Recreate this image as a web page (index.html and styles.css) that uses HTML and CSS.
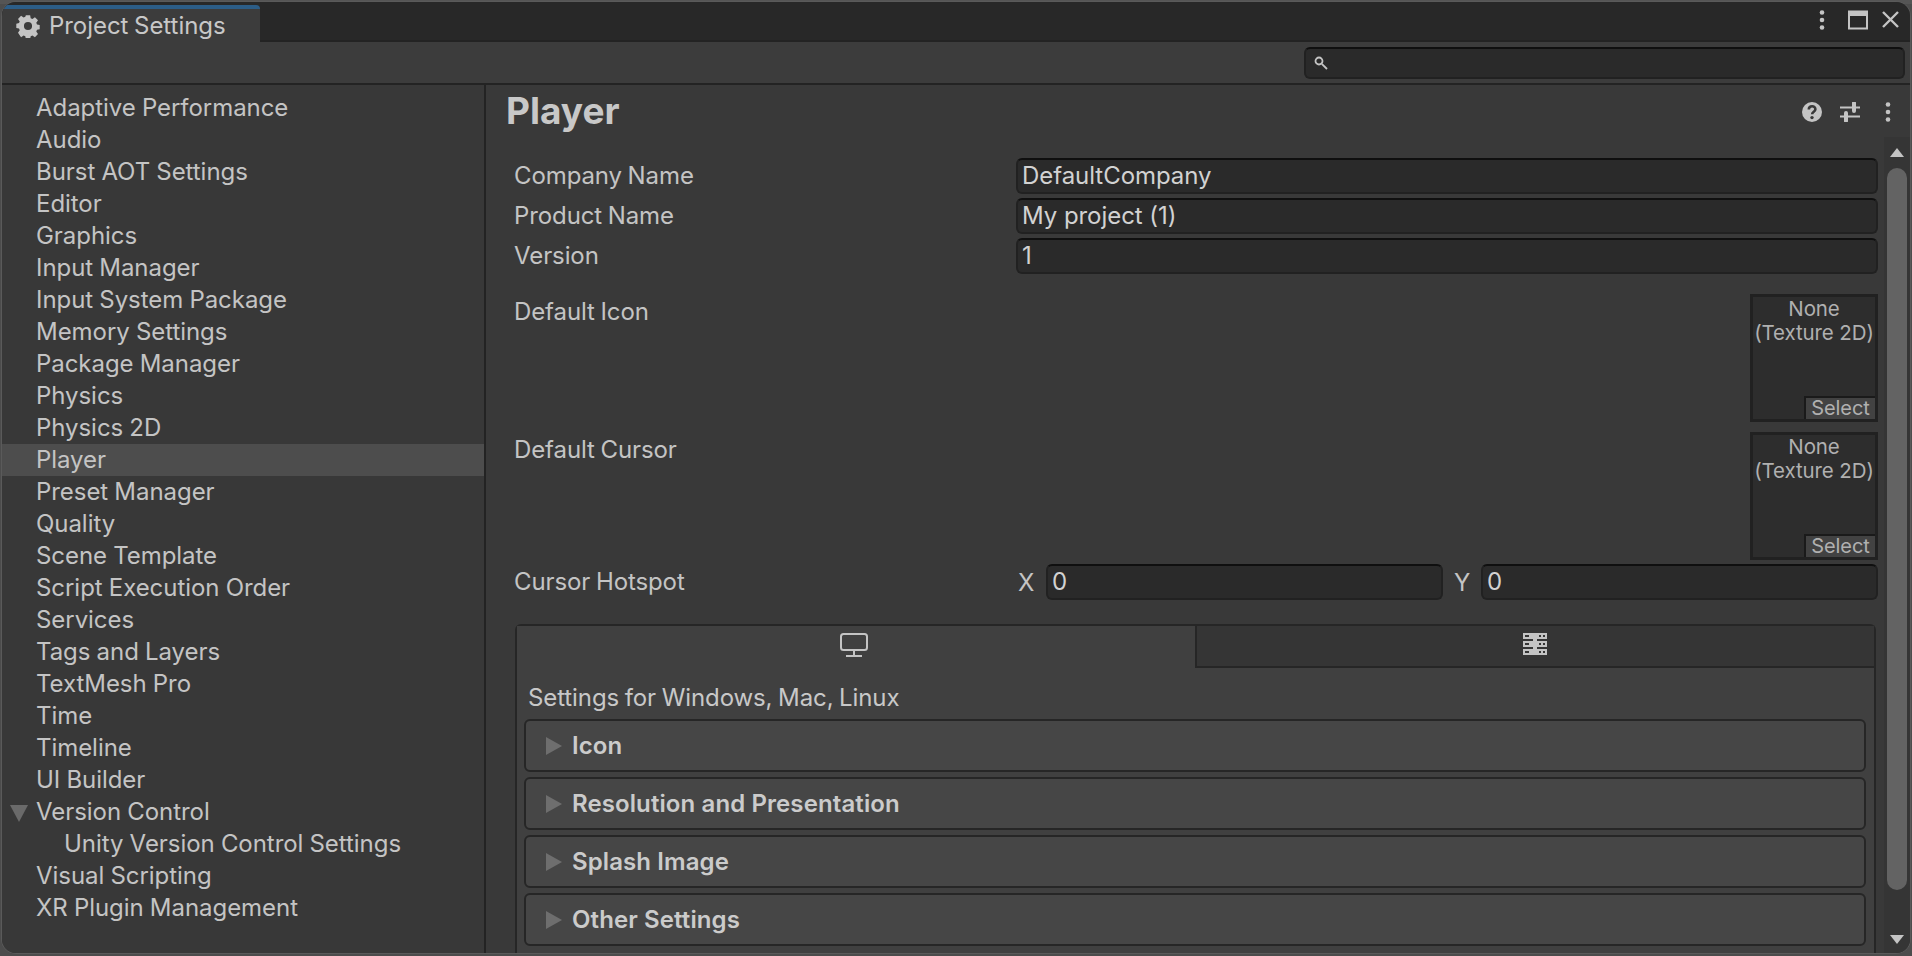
FILE: index.html
```html
<!DOCTYPE html>
<html lang="en">
<head>
<meta charset="utf-8">
<title>Project Settings</title>
<link rel="stylesheet" href="styles.css">
</head>
<body>
<div class="backdrop"><span class="backdrop-text">Information</span></div>
<div class="window">
  <div class="tabbar">
    <div class="tab">
      <svg class="gear" viewBox="0 0 24 24"><path fill-rule="evenodd" d="M9.6 0h4.8l.6 3.3 1.9.8 2.8-1.9 3.4 3.4-1.9 2.8.8 1.9 3 .6v4.800l-3 .6-.8 1.900 1.900 2.800-3.400 3.400-2.800-1.900-1.900.8-.6 3H9.600l-.6-3-1.900-.8-2.800 1.900L.9 19.500l1.900-2.800-.8-1.900-3-.6V9.400l3-.6.8-1.900L.9 4.100l3.400-3.400 2.800 1.900 1.900-.8zM12 7.500a4.500 4.500 0 1 0 0 9 4.500 4.500 0 0 0 0-9z" transform="translate(1.200 1.200) scale(.9)"/></svg>
      <span>Project Settings</span>
    </div>
    <div class="win-actions">
      <svg class="ico-dots" viewBox="0 0 6 20"><circle cx="3" cy="2.500" r="2.300"/><circle cx="3" cy="10" r="2.300"/><circle cx="3" cy="17.500" r="2.300"/></svg>
      <svg class="ico-max" viewBox="0 0 20 20"><path d="M1 1.500h18v17H1z" class="max-line"/><path d="M1 1h18v5H1z"/></svg>
      <svg class="ico-close" viewBox="0 0 17 17"><path d="M1 1l15 15M16 1L1 16"/></svg>
    </div>
  </div>
  <div class="toolbar">
    <div class="search">
      <svg class="ico-search" viewBox="0 0 14 14"><circle cx="5" cy="5" r="3.500"/><path d="M7.800 7.800L13 13"/></svg>
    </div>
  </div>
  <div class="split">
    <nav class="sidebar">
      <div class="item">Adaptive Performance</div>
      <div class="item">Audio</div>
      <div class="item">Burst AOT Settings</div>
      <div class="item">Editor</div>
      <div class="item">Graphics</div>
      <div class="item">Input Manager</div>
      <div class="item">Input System Package</div>
      <div class="item">Memory Settings</div>
      <div class="item">Package Manager</div>
      <div class="item">Physics</div>
      <div class="item">Physics 2D</div>
      <div class="item selected">Player</div>
      <div class="item">Preset Manager</div>
      <div class="item">Quality</div>
      <div class="item">Scene Template</div>
      <div class="item">Script Execution Order</div>
      <div class="item">Services</div>
      <div class="item">Tags and Layers</div>
      <div class="item">TextMesh Pro</div>
      <div class="item">Time</div>
      <div class="item">Timeline</div>
      <div class="item">UI Builder</div>
      <div class="item parent"><svg class="tri-down" viewBox="0 0 18 17"><path d="M0 0h18L9 17z"/></svg>Version Control</div>
      <div class="item child">Unity Version Control Settings</div>
      <div class="item">Visual Scripting</div>
      <div class="item">XR Plugin Management</div>
    </nav>
    <main class="main">
      <header class="head">
        <h1 class="title">Player</h1>
        <div class="head-actions">
          <svg class="ico-help" viewBox="0 0 20 20"><circle cx="10" cy="10" r="10"/><path class="help-q" d="M6.800 7.400c0-4.200 6.600-4.200 6.600-.2 0 2.600-3.300 2.500-3.300 5.100"/><circle class="help-dot" cx="10" cy="15.600" r="1.700"/></svg>
          <svg class="ico-sliders" viewBox="0 0 20 20"><path d="M0 5.500h12M16 5.500h4M0 14.500h4M8 14.500h12"/><path class="knob" d="M14 1v8M6 11v8"/></svg>
          <svg class="ico-dots head-dots" viewBox="0 0 6 20"><circle cx="3" cy="2.500" r="2.300"/><circle cx="3" cy="10" r="2.300"/><circle cx="3" cy="17.500" r="2.300"/></svg>
        </div>
      </header>
      <div class="scroller">
        <div class="content">
          <div class="row">
            <label class="label">Company Name</label>
            <div class="input grow">DefaultCompany</div>
          </div>
          <div class="row">
            <label class="label">Product Name</label>
            <div class="input grow">My project (1)</div>
          </div>
          <div class="row">
            <label class="label">Version</label>
            <div class="input grow">1</div>
          </div>
          <div class="row row-object first-object">
            <label class="label label-top">Default Icon</label>
            <div class="object">
              <div class="object-text">None<br>(Texture 2D)</div>
              <div class="select">Select</div>
            </div>
          </div>
          <div class="row row-object">
            <label class="label label-top">Default Cursor</label>
            <div class="object">
              <div class="object-text">None<br>(Texture 2D)</div>
              <div class="select">Select</div>
            </div>
          </div>
          <div class="row row-hotspot">
            <label class="label">Cursor Hotspot</label>
            <span class="axis axis-x">X</span>
            <div class="input axis-input">0</div>
            <span class="axis axis-y">Y</span>
            <div class="input axis-input">0</div>
          </div>
          <section class="tabgroup">
            <div class="platforms">
              <div class="platform active">
                <svg class="ico-monitor" viewBox="0 0 28 24"><rect x="1" y="1" width="26" height="16" rx="2.500"/><path d="M14 17v5M6 23h16"/></svg>
              </div>
              <div class="platform">
                <svg class="ico-server" viewBox="0 0 24 22"><path d="M0 0h24v6H0zM0 8h24v6H0zM0 16h24v6H0zM10 6h4v2h-4zM10 14h4v2h-4z"/><path class="hole" d="M2 2h4v2H2zM16 2h2v2h-2zM20 2h2v2h-2zM2 10h4v2H2zM16 10h2v2h-2zM20 10h2v2h-2zM2 18h4v2H2zM16 18h2v2h-2zM20 18h2v2h-2z"/></svg>
              </div>
            </div>
            <div class="settings-for">Settings for Windows, Mac, Linux</div>
            <div class="sections">
              <div class="sec"><svg class="tri-right" viewBox="0 0 16 18"><path d="M0 0l16 9L0 18z"/></svg>Icon</div>
              <div class="sec"><svg class="tri-right" viewBox="0 0 16 18"><path d="M0 0l16 9L0 18z"/></svg>Resolution and Presentation</div>
              <div class="sec"><svg class="tri-right" viewBox="0 0 16 18"><path d="M0 0l16 9L0 18z"/></svg>Splash Image</div>
              <div class="sec"><svg class="tri-right" viewBox="0 0 16 18"><path d="M0 0l16 9L0 18z"/></svg>Other Settings</div>
            </div>
          </section>
        </div>
        <div class="scrollbar">
          <svg class="arrow" viewBox="0 0 14 9"><path d="M7 0l7 9H0z"/></svg>
          <div class="thumb"></div>
          <svg class="arrow arrow-down" viewBox="0 0 14 9"><path d="M0 0h14L7 9z"/></svg>
        </div>
      </div>
    </main>
  </div>
</div>
</body>
</html>
```

FILE: styles.css
```css
* { box-sizing: border-box; }

html, body {
  margin: 0;
  height: 100%;
}

body {
  position: relative;
  width: 1912px;
  height: 956px;
  overflow: hidden;
  background: #4c4c4c;
  padding: 2px 2px 3px;
  font-family: Inter, "Noto Sans", sans-serif;
  font-size: 24px;
  letter-spacing: -0.1px;
  word-spacing: -1px;
  color: #c4c4c4;
}

.backdrop {
  position: absolute;
  inset: 0 0 auto 0;
  height: 4px;
  background: #555;
  overflow: hidden;
}

.backdrop-text {
  position: absolute;
  left: 1497px;
  top: -23px;
  font-size: 24px;
  line-height: 30px;
  color: #c4c4c4;
}

.window {
  position: relative;
  height: 951px;
  border-radius: 14px;
  overflow: hidden;
  background: #383838;
  display: flex;
  flex-direction: column;
  box-shadow: 0 0 0 1px #5a5a5a;
}

.tabbar {
  height: 40px;
  flex: none;
  display: flex;
  justify-content: space-between;
  background: #282828;
  border-bottom: 2px solid #232323;
}

.tab {
  width: 258px;
  height: 40px;
  margin-top: 3px;
  display: flex;
  align-items: center;
  gap: 9px;
  padding: 0 0 3px 14px;
  background: #3c3c3c;
  border-top: 4px solid #2c5d87;
  border-top-right-radius: 4px;
  letter-spacing: -0.05px;
  color: #c8c8c8;
}

.gear {
  width: 24px;
  height: 24px;
  fill: #c4c4c4;
  flex: none;
}

.win-actions {
  display: flex;
  align-items: center;
  padding: 0 11px 3px 0;
}

.ico-dots {
  display: block;
  width: 6px;
  height: 20px;
  fill: #c4c4c4;
}

.ico-max {
  width: 20px;
  height: 20px;
  margin-left: 23px;
  fill: #c4c4c4;
}

.ico-max .max-line {
  fill: none;
  stroke: #c4c4c4;
  stroke-width: 2;
}

.ico-close {
  width: 17px;
  height: 17px;
  margin-left: 14px;
  fill: none;
  stroke: #c4c4c4;
  stroke-width: 2.400;
}

.toolbar {
  height: 43px;
  flex: none;
  display: flex;
  justify-content: flex-end;
  align-items: flex-start;
  padding: 5px 5px 0 0;
  background: #3c3c3c;
  border-bottom: 2px solid #232323;
}

.search {
  width: 601px;
  height: 32px;
  background: #2a2a2a;
  border: 2px solid #212121;
  border-top-color: #0f0f0f;
  border-radius: 6px;
  display: flex;
  align-items: center;
  padding-left: 8px;
}

.ico-search {
  width: 14px;
  height: 14px;
  fill: none;
  stroke: #c4c4c4;
  stroke-width: 1.800;
}

.split {
  flex: 1;
  min-height: 0;
  display: flex;
}

.sidebar {
  width: 484px;
  flex: none;
  padding-top: 7px;
  border-right: 2px solid #232323;
  background: #383838;
}

.item {
  position: relative;
  height: 32px;
  line-height: 32px;
  padding-left: 34px;
  letter-spacing: -0.05px;
  word-spacing: -0.5px;
  color: #c4c4c4;
  white-space: nowrap;
}

.item.selected { background: #4d4d4d; }
.item.child { padding-left: 62px; }

.tri-down {
  position: absolute;
  left: 8px;
  top: 9px;
  width: 18px;
  height: 17px;
  fill: #6a6a6a;
}

.main {
  flex: 1;
  min-width: 0;
  display: flex;
  flex-direction: column;
  background: #393939;
}

.head {
  height: 52px;
  flex: none;
  display: flex;
  justify-content: space-between;
  align-items: center;
  padding: 0 19px 0 20px;
}

.title {
  margin: 0;
  font-size: 37px;
  font-weight: 700;
  line-height: 44px;
  letter-spacing: 0;
  color: #c8c8c8;
}

.head-actions {
  display: flex;
  align-items: center;
  padding-top: 2px;
  gap: 18px;
}

.head-dots { margin-left: 7px; }

.ico-help {
  width: 20px;
  height: 20px;
  fill: #c4c4c4;
}

.help-q {
  fill: none;
  stroke: #393939;
  stroke-width: 2.600;
}

.help-dot { fill: #393939; }

.ico-sliders {
  width: 20px;
  height: 20px;
  fill: none;
  stroke: #c4c4c4;
  stroke-width: 2;
}

.ico-sliders .knob {
  stroke-width: 4;
  stroke-linecap: round;
}

.scroller {
  flex: 1;
  min-height: 0;
  display: flex;
}

.content {
  flex: 1;
  min-width: 0;
  padding: 21px 6px 0 28px;
}

.row {
  display: flex;
  align-items: center;
  height: 36px;
  margin-bottom: 4px;
}

.row-object {
  height: 128px;
  align-items: flex-start;
  margin-bottom: 10px;
}

.first-object { margin-top: 20px; }
.row-hotspot { margin-top: -6px; }

.label {
  width: 502px;
  flex: none;
  padding-bottom: 2px;
  color: #c4c4c4;
}

.label-top { padding-top: 3px; }

.input {
  height: 36px;
  min-width: 0;
  background: #2a2a2a;
  border: 2px solid #212121;
  border-top-color: #0f0f0f;
  border-radius: 6px;
  padding-left: 4px;
  line-height: 32px;
  letter-spacing: -0.05px;
  word-spacing: 0;
  color: #d2d2d2;
  white-space: nowrap;
}

.grow { flex: 1; }
.axis-input { width: 397px; flex: none; }

.axis { flex: none; color: #c4c4c4; }
.axis-x { width: 30px; padding-left: 2px; }
.axis-y { width: 38px; padding-left: 11px; }

.object {
  position: relative;
  width: 128px;
  height: 128px;
  margin-left: auto;
  background: #2d2d2d;
  border: 3px solid #212121;
}

.object-text {
  text-align: center;
  font-size: 20.500px;
  line-height: 24px;
  word-spacing: 0;
  color: #b0b0b0;
  white-space: nowrap;
}

.select {
  position: absolute;
  right: 0;
  bottom: 0;
  width: 71px;
  height: 23px;
  background: #424242;
  border-top: 2px solid #1a1a1a;
  border-left: 2px solid #1a1a1a;
  text-align: center;
  font-size: 20px;
  line-height: 21px;
  color: #b0b0b0;
}

.tabgroup {
  margin: 24px 2px 0 1px;
  border: 2px solid #262626;
  border-bottom: 0;
  border-radius: 6px 6px 0 0;
  background: #404040;
  height: 340px;
}

.platforms {
  display: flex;
  height: 42px;
}

.platform {
  flex: 1;
  display: flex;
  align-items: center;
  justify-content: center;
  padding: 0 2px 4px 0;
  background: #353535;
  border-bottom: 2px solid #262626;
  border-left: 2px solid #262626;
}

.platform.active {
  flex: none;
  width: 678px;
  padding-right: 4px;
  background: #404040;
  border: 0;
}

.ico-monitor {
  width: 28px;
  height: 24px;
  fill: none;
  stroke: #c4c4c4;
  stroke-width: 2;
}

.ico-server {
  width: 24px;
  height: 22px;
  fill: #c4c4c4;
}

.ico-server .hole { fill: #353535; }

.settings-for {
  height: 51px;
  padding: 0 0 0 11px;
  line-height: 59px;
  color: #c8c8c8;
  white-space: nowrap;
}

.sections {
  display: flex;
  flex-direction: column;
  gap: 5px;
  margin: 0 8px 0 7px;
}

.sec {
  position: relative;
  height: 53px;
  background: #464646;
  border: 2px solid #262626;
  border-radius: 6px;
  padding-left: 46px;
  line-height: 49px;
  font-weight: 600;
  letter-spacing: 0.1px;
  word-spacing: 0;
  color: #cbcbcb;
}

.tri-right {
  position: absolute;
  left: 20px;
  top: 16px;
  width: 16px;
  height: 18px;
  fill: #6e6e6e;
}

.scrollbar {
  width: 26px;
  flex: none;
  display: flex;
  flex-direction: column;
  align-items: center;
  background: #353535;
  padding: 11px 0 9px;
}

.arrow {
  width: 14px;
  height: 9px;
  flex: none;
  fill: #c4c4c4;
}

.arrow-down { margin-top: auto; }

.thumb {
  width: 20px;
  height: 722px;
  margin-top: 11px;
  flex: none;
  border-radius: 10px;
  background: #636363;
}
```
